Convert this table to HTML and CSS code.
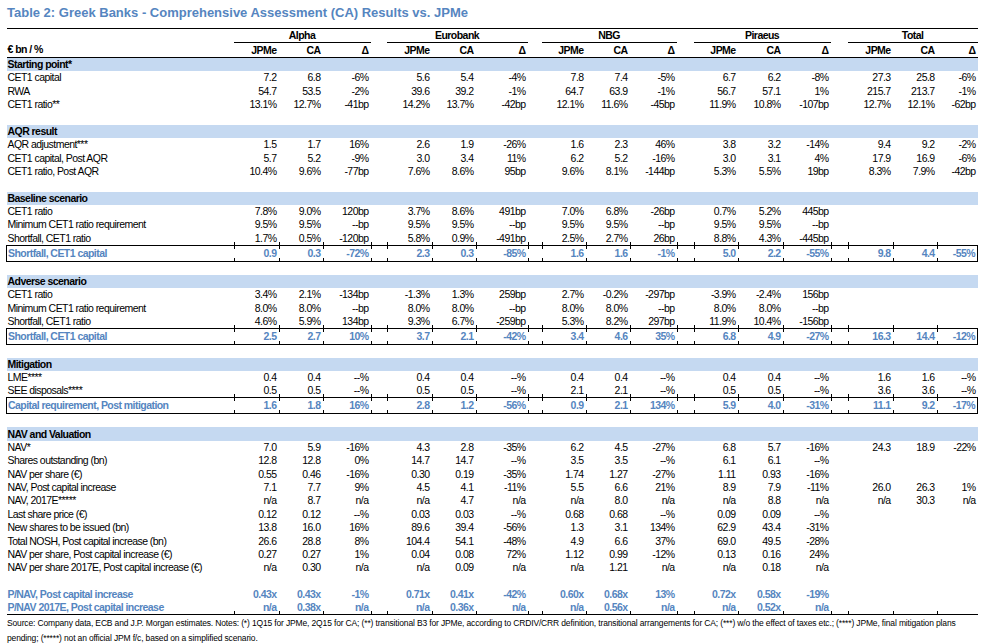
FILE: index.html
```html
<!DOCTYPE html>
<html lang="en">
<head>
<meta charset="utf-8">
<title>Table 2: Greek Banks - Comprehensive Assessment (CA) Results vs. JPMe</title>
<link rel="stylesheet" href="styles.css">
</head>
<body>
<div class="page">
  <div class="title">Table 2: Greek Banks - Comprehensive Assessment (CA) Results vs. JPMe</div>
  <table class="ca">
    <colgroup>
      <col class="c-lbl">
      <col class="c45"><col class="c44"><col class="c48">
      <col class="c16">
      <col class="c45"><col class="c44"><col class="c52">
      <col class="c14">
      <col class="c44"><col class="c44"><col class="c47">
      <col class="c17">
      <col class="c44"><col class="c45"><col class="c48">
      <col class="c17">
      <col class="c45"><col class="c44"><col class="c41">
    </colgroup>
    <tbody>
      <tr class="grp">
        <td class="lbl"></td>
        <td class="gname" colspan="3">Alpha</td><td class="sp"></td>
        <td class="gname" colspan="3">Eurobank</td><td class="sp"></td>
        <td class="gname" colspan="3">NBG</td><td class="sp"></td>
        <td class="gname" colspan="3">Piraeus</td><td class="sp"></td>
        <td class="gname" colspan="3">Total</td>
      </tr>
      <tr class="sub">
        <td class="lbl">€ bn / %</td>
        <td>JPMe</td><td>CA</td><td>Δ</td><td class="sp"></td>
        <td>JPMe</td><td>CA</td><td>Δ</td><td class="sp"></td>
        <td>JPMe</td><td>CA</td><td>Δ</td><td class="sp"></td>
        <td>JPMe</td><td>CA</td><td>Δ</td><td class="sp"></td>
        <td>JPMe</td><td>CA</td><td>Δ</td>
      </tr>

      <tr class="band"><td colspan="20">Starting point*</td></tr>
      <tr><td class="lbl">CET1 capital</td><td>7.2</td><td>6.8</td><td>-6%</td><td class="sp"></td><td>5.6</td><td>5.4</td><td>-4%</td><td class="sp"></td><td>7.8</td><td>7.4</td><td>-5%</td><td class="sp"></td><td>6.7</td><td>6.2</td><td>-8%</td><td class="sp"></td><td>27.3</td><td>25.8</td><td>-6%</td></tr>
      <tr><td class="lbl">RWA</td><td>54.7</td><td>53.5</td><td>-2%</td><td class="sp"></td><td>39.6</td><td>39.2</td><td>-1%</td><td class="sp"></td><td>64.7</td><td>63.9</td><td>-1%</td><td class="sp"></td><td>56.7</td><td>57.1</td><td>1%</td><td class="sp"></td><td>215.7</td><td>213.7</td><td>-1%</td></tr>
      <tr><td class="lbl">CET1 ratio**</td><td>13.1%</td><td>12.7%</td><td>-41bp</td><td class="sp"></td><td>14.2%</td><td>13.7%</td><td>-42bp</td><td class="sp"></td><td>12.1%</td><td>11.6%</td><td>-45bp</td><td class="sp"></td><td>11.9%</td><td>10.8%</td><td>-107bp</td><td class="sp"></td><td>12.7%</td><td>12.1%</td><td>-62bp</td></tr>
      <tr class="blank"><td colspan="20"></td></tr>

      <tr class="band"><td colspan="20">AQR result</td></tr>
      <tr><td class="lbl">AQR adjustment***</td><td>1.5</td><td>1.7</td><td>16%</td><td class="sp"></td><td>2.6</td><td>1.9</td><td>-26%</td><td class="sp"></td><td>1.6</td><td>2.3</td><td>46%</td><td class="sp"></td><td>3.8</td><td>3.2</td><td>-14%</td><td class="sp"></td><td>9.4</td><td>9.2</td><td>-2%</td></tr>
      <tr><td class="lbl">CET1 capital, Post AQR</td><td>5.7</td><td>5.2</td><td>-9%</td><td class="sp"></td><td>3.0</td><td>3.4</td><td>11%</td><td class="sp"></td><td>6.2</td><td>5.2</td><td>-16%</td><td class="sp"></td><td>3.0</td><td>3.1</td><td>4%</td><td class="sp"></td><td>17.9</td><td>16.9</td><td>-6%</td></tr>
      <tr><td class="lbl">CET1 ratio, Post AQR</td><td>10.4%</td><td>9.6%</td><td>-77bp</td><td class="sp"></td><td>7.6%</td><td>8.6%</td><td>95bp</td><td class="sp"></td><td>9.6%</td><td>8.1%</td><td>-144bp</td><td class="sp"></td><td>5.3%</td><td>5.5%</td><td>19bp</td><td class="sp"></td><td>8.3%</td><td>7.9%</td><td>-42bp</td></tr>
      <tr class="blank"><td colspan="20"></td></tr>

      <tr class="band"><td colspan="20">Baseline scenario</td></tr>
      <tr><td class="lbl">CET1 ratio</td><td>7.8%</td><td>9.0%</td><td>120bp</td><td class="sp"></td><td>3.7%</td><td>8.6%</td><td>491bp</td><td class="sp"></td><td>7.0%</td><td>6.8%</td><td>-26bp</td><td class="sp"></td><td>0.7%</td><td>5.2%</td><td>445bp</td><td class="sp"></td><td></td><td></td><td></td></tr>
      <tr><td class="lbl">Minimum CET1 ratio requirement</td><td>9.5%</td><td>9.5%</td><td>--bp</td><td class="sp"></td><td>9.5%</td><td>9.5%</td><td>--bp</td><td class="sp"></td><td>9.5%</td><td>9.5%</td><td>--bp</td><td class="sp"></td><td>9.5%</td><td>9.5%</td><td>--bp</td><td class="sp"></td><td></td><td></td><td></td></tr>
      <tr class="prebox"><td class="lbl">Shortfall, CET1 ratio</td><td>1.7%</td><td>0.5%</td><td>-120bp</td><td class="sp"></td><td>5.8%</td><td>0.9%</td><td>-491bp</td><td class="sp"></td><td>2.5%</td><td>2.7%</td><td>26bp</td><td class="sp"></td><td>8.8%</td><td>4.3%</td><td>-445bp</td><td class="sp"></td><td></td><td></td><td></td></tr>
      <tr class="box"><td class="lbl">Shortfall, CET1 capital</td><td>0.9</td><td>0.3</td><td>-72%</td><td class="sp"></td><td>2.3</td><td>0.3</td><td>-85%</td><td class="sp"></td><td>1.6</td><td>1.6</td><td>-1%</td><td class="sp"></td><td>5.0</td><td>2.2</td><td>-55%</td><td class="sp"></td><td>9.8</td><td>4.4</td><td>-55%</td></tr>
      <tr class="blank"><td colspan="20"></td></tr>

      <tr class="band"><td colspan="20">Adverse scenario</td></tr>
      <tr><td class="lbl">CET1 ratio</td><td>3.4%</td><td>2.1%</td><td>-134bp</td><td class="sp"></td><td>-1.3%</td><td>1.3%</td><td>259bp</td><td class="sp"></td><td>2.7%</td><td>-0.2%</td><td>-297bp</td><td class="sp"></td><td>-3.9%</td><td>-2.4%</td><td>156bp</td><td class="sp"></td><td></td><td></td><td></td></tr>
      <tr><td class="lbl">Minimum CET1 ratio requirement</td><td>8.0%</td><td>8.0%</td><td>--bp</td><td class="sp"></td><td>8.0%</td><td>8.0%</td><td>--bp</td><td class="sp"></td><td>8.0%</td><td>8.0%</td><td>--bp</td><td class="sp"></td><td>8.0%</td><td>8.0%</td><td>--bp</td><td class="sp"></td><td></td><td></td><td></td></tr>
      <tr class="prebox"><td class="lbl">Shortfall, CET1 ratio</td><td>4.6%</td><td>5.9%</td><td>134bp</td><td class="sp"></td><td>9.3%</td><td>6.7%</td><td>-259bp</td><td class="sp"></td><td>5.3%</td><td>8.2%</td><td>297bp</td><td class="sp"></td><td>11.9%</td><td>10.4%</td><td>-156bp</td><td class="sp"></td><td></td><td></td><td></td></tr>
      <tr class="box"><td class="lbl">Shortfall, CET1 capital</td><td>2.5</td><td>2.7</td><td>10%</td><td class="sp"></td><td>3.7</td><td>2.1</td><td>-42%</td><td class="sp"></td><td>3.4</td><td>4.6</td><td>35%</td><td class="sp"></td><td>6.8</td><td>4.9</td><td>-27%</td><td class="sp"></td><td>16.3</td><td>14.4</td><td>-12%</td></tr>
      <tr class="blank"><td colspan="20"></td></tr>

      <tr class="band"><td colspan="20">Mitigation</td></tr>
      <tr><td class="lbl">LME****</td><td>0.4</td><td>0.4</td><td>--%</td><td class="sp"></td><td>0.4</td><td>0.4</td><td>--%</td><td class="sp"></td><td>0.4</td><td>0.4</td><td>--%</td><td class="sp"></td><td>0.4</td><td>0.4</td><td>--%</td><td class="sp"></td><td>1.6</td><td>1.6</td><td>--%</td></tr>
      <tr class="prebox"><td class="lbl">SEE disposals****</td><td>0.5</td><td>0.5</td><td>--%</td><td class="sp"></td><td>0.5</td><td>0.5</td><td>--%</td><td class="sp"></td><td>2.1</td><td>2.1</td><td>--%</td><td class="sp"></td><td>0.5</td><td>0.5</td><td>--%</td><td class="sp"></td><td>3.6</td><td>3.6</td><td>--%</td></tr>
      <tr class="box"><td class="lbl">Capital requirement, Post mitigation</td><td>1.6</td><td>1.8</td><td>16%</td><td class="sp"></td><td>2.8</td><td>1.2</td><td>-56%</td><td class="sp"></td><td>0.9</td><td>2.1</td><td>134%</td><td class="sp"></td><td>5.9</td><td>4.0</td><td>-31%</td><td class="sp"></td><td>11.1</td><td>9.2</td><td>-17%</td></tr>
      <tr class="blank"><td colspan="20"></td></tr>

      <tr class="band"><td colspan="20">NAV and Valuation</td></tr>
      <tr><td class="lbl">NAV*</td><td>7.0</td><td>5.9</td><td>-16%</td><td class="sp"></td><td>4.3</td><td>2.8</td><td>-35%</td><td class="sp"></td><td>6.2</td><td>4.5</td><td>-27%</td><td class="sp"></td><td>6.8</td><td>5.7</td><td>-16%</td><td class="sp"></td><td>24.3</td><td>18.9</td><td>-22%</td></tr>
      <tr><td class="lbl">Shares outstanding (bn)</td><td>12.8</td><td>12.8</td><td>0%</td><td class="sp"></td><td>14.7</td><td>14.7</td><td>--%</td><td class="sp"></td><td>3.5</td><td>3.5</td><td>--%</td><td class="sp"></td><td>6.1</td><td>6.1</td><td>--%</td><td class="sp"></td><td></td><td></td><td></td></tr>
      <tr><td class="lbl">NAV per share (€)</td><td>0.55</td><td>0.46</td><td>-16%</td><td class="sp"></td><td>0.30</td><td>0.19</td><td>-35%</td><td class="sp"></td><td>1.74</td><td>1.27</td><td>-27%</td><td class="sp"></td><td>1.11</td><td>0.93</td><td>-16%</td><td class="sp"></td><td></td><td></td><td></td></tr>
      <tr><td class="lbl">NAV, Post capital increase</td><td>7.1</td><td>7.7</td><td>9%</td><td class="sp"></td><td>4.5</td><td>4.1</td><td>-11%</td><td class="sp"></td><td>5.5</td><td>6.6</td><td>21%</td><td class="sp"></td><td>8.9</td><td>7.9</td><td>-11%</td><td class="sp"></td><td>26.0</td><td>26.3</td><td>1%</td></tr>
      <tr><td class="lbl">NAV, 2017E*****</td><td>n/a</td><td>8.7</td><td>n/a</td><td class="sp"></td><td>n/a</td><td>4.7</td><td>n/a</td><td class="sp"></td><td>n/a</td><td>8.0</td><td>n/a</td><td class="sp"></td><td>n/a</td><td>8.8</td><td>n/a</td><td class="sp"></td><td>n/a</td><td>30.3</td><td>n/a</td></tr>
      <tr><td class="lbl">Last share price (€)</td><td>0.12</td><td>0.12</td><td>--%</td><td class="sp"></td><td>0.03</td><td>0.03</td><td>--%</td><td class="sp"></td><td>0.68</td><td>0.68</td><td>--%</td><td class="sp"></td><td>0.09</td><td>0.09</td><td>--%</td><td class="sp"></td><td></td><td></td><td></td></tr>
      <tr><td class="lbl">New shares to be issued (bn)</td><td>13.8</td><td>16.0</td><td>16%</td><td class="sp"></td><td>89.6</td><td>39.4</td><td>-56%</td><td class="sp"></td><td>1.3</td><td>3.1</td><td>134%</td><td class="sp"></td><td>62.9</td><td>43.4</td><td>-31%</td><td class="sp"></td><td></td><td></td><td></td></tr>
      <tr><td class="lbl">Total NOSH, Post capital increase (bn)</td><td>26.6</td><td>28.8</td><td>8%</td><td class="sp"></td><td>104.4</td><td>54.1</td><td>-48%</td><td class="sp"></td><td>4.9</td><td>6.6</td><td>37%</td><td class="sp"></td><td>69.0</td><td>49.5</td><td>-28%</td><td class="sp"></td><td></td><td></td><td></td></tr>
      <tr><td class="lbl">NAV per share, Post capital increase (€)</td><td>0.27</td><td>0.27</td><td>1%</td><td class="sp"></td><td>0.04</td><td>0.08</td><td>72%</td><td class="sp"></td><td>1.12</td><td>0.99</td><td>-12%</td><td class="sp"></td><td>0.13</td><td>0.16</td><td>24%</td><td class="sp"></td><td></td><td></td><td></td></tr>
      <tr><td class="lbl">NAV per share 2017E, Post capital increase (€)</td><td>n/a</td><td>0.30</td><td>n/a</td><td class="sp"></td><td>n/a</td><td>0.09</td><td>n/a</td><td class="sp"></td><td>n/a</td><td>1.21</td><td>n/a</td><td class="sp"></td><td>n/a</td><td>0.18</td><td>n/a</td><td class="sp"></td><td></td><td></td><td></td></tr>
      <tr class="blank"><td colspan="20"></td></tr>

      <tr class="blue"><td class="lbl">P/NAV, Post capital increase</td><td>0.43x</td><td>0.43x</td><td>-1%</td><td class="sp"></td><td>0.71x</td><td>0.41x</td><td>-42%</td><td class="sp"></td><td>0.60x</td><td>0.68x</td><td>13%</td><td class="sp"></td><td>0.72x</td><td>0.58x</td><td>-19%</td><td class="sp"></td><td></td><td></td><td></td></tr>
      <tr class="blue last"><td class="lbl">P/NAV 2017E, Post capital increase</td><td>n/a</td><td>0.38x</td><td>n/a</td><td class="sp"></td><td>n/a</td><td>0.36x</td><td>n/a</td><td class="sp"></td><td>n/a</td><td>0.56x</td><td>n/a</td><td class="sp"></td><td>n/a</td><td>0.52x</td><td>n/a</td><td class="sp"></td><td></td><td></td><td></td></tr>
    </tbody>
  </table>
  <p class="source">Source: Company data, ECB and J.P. Morgan estimates. Notes: (*) 1Q15 for JPMe, 2Q15 for CA; (**) transitional B3 for JPMe, according to CRDIV/CRR definition, transitional arrangements for CA; (***) w/o the effect of taxes etc.; (****) JPMe, final mitigation plans<br>pending; (*****) not an official JPM f/c, based on a simplified scenario.</p>
</div>
</body>
</html>
```

FILE: styles.css
```css
html, body {
  margin: 0;
  padding: 0;
  background: #ffffff;
}

body {
  font-family: "Liberation Sans", Arial, sans-serif;
  font-size: 10.5px;
  color: #000000;
}

.page {
  padding-left: 6px;
  width: 971px;
}

.title {
  height: 28px;
  line-height: 26px;
  font-size: 13px;
  font-weight: bold;
  color: #5585c0;
  padding-left: 1px;
  white-space: nowrap;
}

table.ca {
  border-collapse: collapse;
  table-layout: fixed;
  width: 971px;
  border-top: 1px solid #000;
  letter-spacing: -0.55px;
}

.c-lbl { width: 227px; }
.c41 { width: 41px; }
.c44 { width: 44px; }
.c45 { width: 45px; }
.c47 { width: 47px; }
.c48 { width: 48px; }
.c52 { width: 52px; }
.c14 { width: 14px; }
.c16 { width: 16px; }
.c17 { width: 17px; }

.ca td {
  padding: 0 2px 0 0;
  line-height: 13px;
  text-align: right;
  white-space: nowrap;
  overflow: hidden;
  vertical-align: middle;
}

.ca td.lbl {
  text-align: left;
  padding-left: 1px;
}

.ca tr { height: 13.4px; }

.ca tr.grp { height: 14px; }
.ca tr.grp td { font-weight: bold; }
.ca td.gname {
  text-align: center;
  border-bottom: 1px solid #000;
  padding: 0;
}

.ca tr.sub { height: 15px; }
.ca tr.sub td {
  font-weight: bold;
  border-bottom: 1px solid #000;
}

.ca tr.band td {
  background: #c5d9f1;
  font-weight: bold;
  text-align: left;
  padding-left: 1px;
}

.ca tr.blank { height: 13.4px; }

.ca tr.box { height: 16px; }
.ca tr.box td {
  color: #5585c0;
  font-weight: bold;
  border-top: 1px solid #000;
  border-bottom: 1px solid #000;
  background:
    linear-gradient(#000, #000) left top / 1px 3px no-repeat,
    linear-gradient(#000, #000) left bottom / 1px 3px no-repeat;
}
.ca tr.box td:first-child { border-left: 1px solid #000; background: none; }
.ca tr.box td:last-child { border-right: 1px solid #000; }

.ca tr.prebox td + td,
.ca tr.last td + td {
  background: linear-gradient(#000, #000) left bottom / 1px 3px no-repeat;
}

.ca tr.blue td {
  color: #5585c0;
  font-weight: bold;
}

.ca tr.last td {
  border-bottom: 1px solid #000;
}

.source {
  margin: 0;
  padding: 1px 0 0 1px;
  font-size: 8.5px;
  letter-spacing: -0.15px;
  line-height: 15px;
  white-space: nowrap;
}
```
